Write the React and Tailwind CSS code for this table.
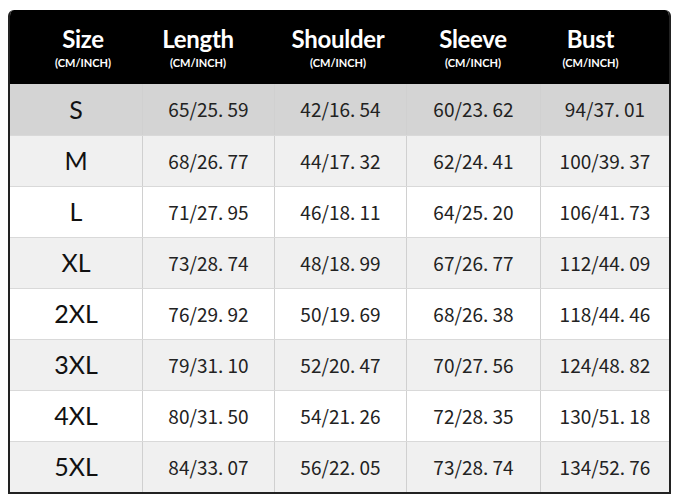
import React from "react";

const headers = [
  ["Size", "pl-[14px]"],
  ["Length", "pr-[20px]"],
  ["Shoulder", "pr-[4px]"],
  ["Sleeve", ""],
  ["Bust", "pr-[28px]"],
];
const rows = [
  ["S", "65/25. 59", "42/16. 54", "60/23. 62", "94/37. 01"],
  ["M", "68/26. 77", "44/17. 32", "62/24. 41", "100/39. 37"],
  ["L", "71/27. 95", "46/18. 11", "64/25. 20", "106/41. 73"],
  ["XL", "73/28. 74", "48/18. 99", "67/26. 77", "112/44. 09"],
  ["2XL", "76/29. 92", "50/19. 69", "68/26. 38", "118/44. 46"],
  ["3XL", "79/31. 10", "52/20. 47", "70/27. 56", "124/48. 82"],
  ["4XL", "80/31. 50", "54/21. 26", "72/28. 35", "130/51. 18"],
  ["5XL", "84/33. 07", "56/22. 05", "73/28. 74", "134/52. 76"],
];

const rowBg = (i) =>
  i === 0 ? "bg-[#d4d4d4]" : i % 2 === 1 ? "bg-[#f0f0f0]" : "bg-white";

export default function App() {
  return (
    <div className="w-[677px] h-[502px] bg-white pt-[10px] pl-[8px]">
      <div className="w-[663px] rounded-t-[6px] overflow-hidden border-x-2 border-b-2 border-[#222] border-t-0">
        <div className="grid grid-cols-[132px_132px_132px_134px_129px] h-[74px] bg-black">
          {headers.map(([h, pad]) => (
            <div key={h} className={`flex flex-col items-center justify-center pb-[1px] ${pad}`}>
              <div className="text-white font-bold text-[24px] leading-[28px] tracking-[-0.3px]" style={{ fontFamily: "Lato, 'Open Sans', sans-serif" }}>
                {h}
              </div>
              <div className="text-white font-bold text-[11px] leading-[13px] mt-[3px]" style={{ fontFamily: "Lato, 'Open Sans', sans-serif" }}>
                (CM/INCH)
              </div>
            </div>
          ))}
        </div>
        {rows.map((r, i) => (
          <div key={r[0]} className={`grid grid-cols-[132px_132px_132px_134px_129px] h-[51px] ${rowBg(i)} ${i > 0 ? "border-t border-[#d9d9d9]" : ""}`}>
            {r.map((c, j) => (
              <div
                key={j}
                className={`flex items-center justify-center ${j > 0 ? "border-l border-[#d0d0d0]" : ""}`}
              >
                {j === 0 ? (
                  <span className="text-[25px] text-[#111]" style={{ fontFamily: "Lato, 'Open Sans', sans-serif" }}>{c}</span>
                ) : (
                  <span className="text-[19px] text-[#222] whitespace-pre" style={{ fontFamily: "'Noto Sans CJK SC', 'Noto Sans', sans-serif" }}>{c}</span>
                )}
              </div>
            ))}
          </div>
        ))}
      </div>
    </div>
  );
}
